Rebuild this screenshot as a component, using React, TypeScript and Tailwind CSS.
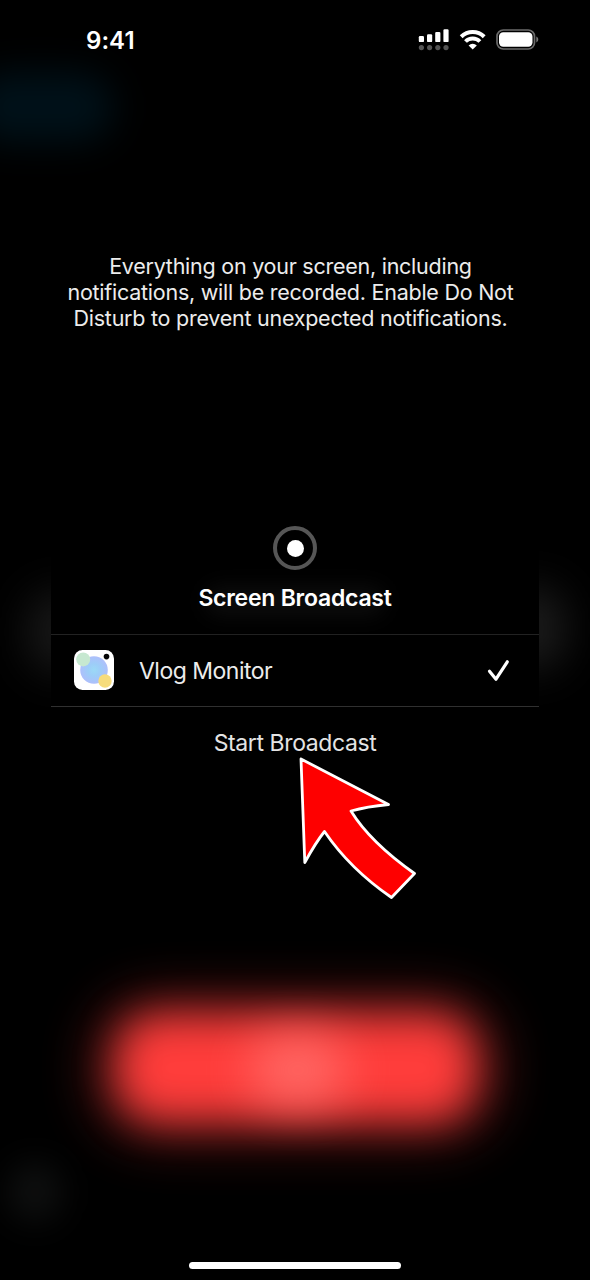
import React from "react";

function Signal() {
  return (
    <svg width="32" height="22" viewBox="0 0 32 22" fill="white">
      <rect x="0.8" y="7.1" width="5.2" height="6" rx="1.2" />
      <rect x="9" y="5.3" width="5.2" height="7.8" rx="1.2" />
      <rect x="17.2" y="2.9" width="5.2" height="10.2" rx="1.2" />
      <rect x="25.4" y="0.3" width="5.2" height="12.8" rx="1.2" />
      <g fill="#555">
        <circle cx="3.4" cy="18.6" r="2.6" />
        <circle cx="11.6" cy="18.6" r="2.6" />
        <circle cx="19.8" cy="18.6" r="2.6" />
        <circle cx="28" cy="18.6" r="2.6" />
      </g>
    </svg>
  );
}

function Wifi() {
  return (
    <svg width="28" height="22" viewBox="0 0 28 22" fill="none" stroke="white">
      <path d="M2.2 7.7 A16.6 16.6 0 0 1 25.2 7.7" strokeWidth="4.1" />
      <path d="M6.5 12.5 A10 10 0 0 1 20.9 12.5" strokeWidth="3.9" />
      <path d="M13.7 20.6 L9.6 16.4 A5.9 5.9 0 0 1 17.8 16.4 Z" fill="white" stroke="none" />
    </svg>
  );
}

function Battery() {
  return (
    <svg width="44" height="22" viewBox="0 0 44 22">
      <rect x="1" y="1" width="37.5" height="19" rx="6.3" fill="none" stroke="#6b6b6b" strokeWidth="1.7" />
      <rect x="3" y="3.2" width="33.5" height="14.6" rx="4.2" fill="white" />
      <path d="M40.3 7.6 C42.9 8.4 42.9 12.6 40.3 13.4 Z" fill="#777" />
    </svg>
  );
}

function AppIcon() {
  return (
    <svg width="40" height="40" viewBox="0 0 40 40" className="mb-px">
      <defs>
        <radialGradient id="lens">
          <stop offset="0" stopColor="#9bd9f6" />
          <stop offset="0.45" stopColor="#9dcdf8" />
          <stop offset="1" stopColor="#aebffb" />
        </radialGradient>
      </defs>
      <rect width="40" height="40" rx="8.5" fill="white" />
      <circle cx="20" cy="20" r="13.8" fill="url(#lens)" />
      <circle cx="9.2" cy="9.4" r="7" fill="#c6e8d0" />
      <circle cx="31" cy="31" r="6.7" fill="#f6dc7c" />
      <circle cx="32.5" cy="6.6" r="2.8" fill="#050505" />
    </svg>
  );
}

function Arrow() {
  return (
    <svg width="120" height="145" viewBox="0 0 120 145" className="absolute left-[298px] top-[756px]">
      <path
        d="M3 3 L90.5 48.5 Q69 50.5 53 55 Q72 86 116.5 117.5 L93.5 141.5 Q52 113 26.5 75.5 Q18 86 6.8 106.5 Z"
        fill="#fe0000"
        stroke="white"
        strokeWidth="2.8"
        strokeLinejoin="round"
      />
    </svg>
  );
}

function Glows() {
  return (
    <div className="absolute inset-0 overflow-hidden">
      <div className="absolute left-[-30px] top-[72px] h-[70px] w-[144px] rounded-full bg-[#001119] blur-[18px]" />
      <div className="absolute left-[26px] top-[590px] h-[84px] w-[70px] rounded-full bg-[#171717] blur-[20px]" />
      <div className="absolute left-[500px] top-[586px] h-[84px] w-[66px] rounded-full bg-[#1b1b1b] blur-[20px]" />
      <div className="absolute left-[8px] top-[1162px] h-[60px] w-[54px] rounded-full bg-[#0e0f0f] blur-[16px]" />
      <div className="absolute left-[96px] top-[998px] h-[140px] w-[400px] rounded-[60px] bg-[#ff3d3b] opacity-40 blur-[27px]" />
      <div className="absolute left-[120px] top-[1018px] h-[100px] w-[352px] rounded-[38px] bg-[#ff3d3b] blur-[20px]" />
      <div className="absolute left-[250px] top-[1036px] h-[68px] w-[96px] rounded-full bg-[#ff7773] opacity-75 blur-[24px]" />
    </div>
  );
}

export default function App() {
  return (
    <main className="relative h-[1280px] w-[590px] overflow-hidden bg-black font-['Inter',sans-serif] text-white">
      <Glows />
      <div className="relative flex h-full flex-col items-center">
        <header className="flex h-20 w-full items-center justify-between pl-[86px] pr-[50px]">
          <time className="pt-[2px] text-[24px] font-semibold leading-none tracking-[0.05px]">9:41</time>
          <div className="flex items-center gap-[9px]">
            <Signal />
            <Wifi />
            <Battery />
          </div>
        </header>

        <p className="mt-[173px] mr-[9px] text-center text-[21.5px] leading-[26px] tracking-[-0.25px] text-[#ececec]">
          <span className="block whitespace-nowrap">Everything on your screen, including</span>
          <span className="block whitespace-nowrap">notifications, will be recorded. Enable Do Not</span>
          <span className="block whitespace-nowrap">Disturb to prevent unexpected notifications.</span>
        </p>

        <section className="mt-[179px] flex w-[488px] flex-col">
          <div className="relative flex h-[125px] flex-col items-center border-b border-[#222] bg-black pt-[16px]">
            <div className="absolute top-[76px] h-[30px] w-[180px] rounded-full bg-[#0c0c0c] blur-[10px]" />
            <div className="relative flex h-[44px] w-[44px] items-center justify-center rounded-full border-[4px] border-[#565656]">
              <div className="h-[17px] w-[17px] rounded-full bg-white" />
            </div>
            <h1 className="relative mt-[13px] text-[23px] font-semibold leading-[30px] tracking-[-0.25px]">Screen Broadcast</h1>
          </div>
          <div className="flex h-[72px] items-center border-b border-[#303030] bg-black pl-[23px] pr-[29px]">
            <AppIcon />
            <span className="ml-[25px] flex-1 pt-px text-[23px] tracking-[-0.5px] text-[#ececec]">Vlog Monitor</span>
            <svg width="23" height="24" viewBox="0 0 23 24" fill="none" stroke="white" strokeWidth="3.2" strokeLinecap="round" strokeLinejoin="round">
              <path d="M2.5 12.3 L9 20.2 L20.3 2.8" />
            </svg>
          </div>
          <button className="h-[72px] text-[23px] tracking-[-0.4px] text-[#e4e4e4]">Start Broadcast</button>
        </section>

        <div className="mt-auto mb-[11px] h-[7px] w-[212px] rounded-full bg-white" />
      </div>
      <Arrow />
    </main>
  );
}
